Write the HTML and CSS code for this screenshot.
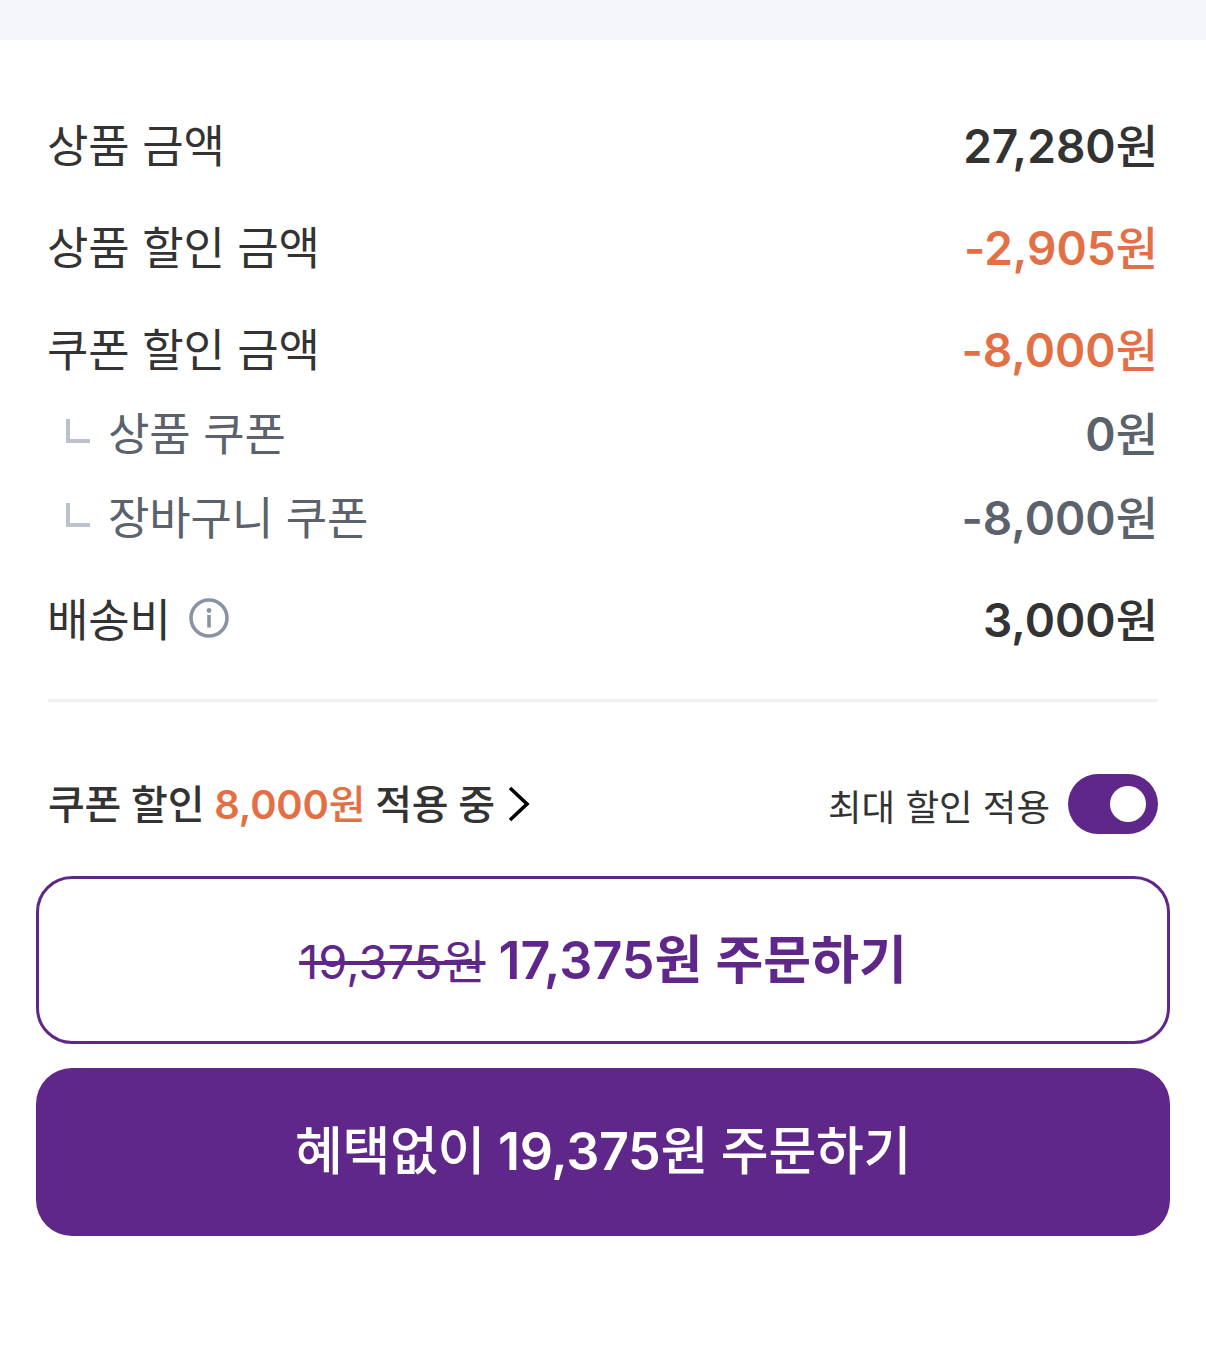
FILE: index.html
```html
<!DOCTYPE html>
<html lang="ko">
  <head>
    <meta charset="UTF-8" />
    <meta name="viewport" content="width=device-width, initial-scale=1.0" />
    <title>주문하기</title>
    <link rel="stylesheet" href="styles.css">
  </head>
  <body>
    <div class="top-band"></div>
    <section class="summary">
      <div class="row">
        <span>상품 금액</span>
        <span class="amount">27,280원</span>
      </div>
      <div class="row">
        <span>상품 할인 금액</span>
        <span class="amount discount">-2,905원</span>
      </div>
      <div class="row">
        <span>쿠폰 할인 금액</span>
        <span class="amount discount">-8,000원</span>
      </div>
      <div class="row sub-row">
        <span class="sub-label"><i class="corner"></i>상품 쿠폰</span>
        <span class="amount">0원</span>
      </div>
      <div class="row sub-row">
        <span class="sub-label"><i class="corner"></i>장바구니 쿠폰</span>
        <span class="amount">-8,000원</span>
      </div>
      <div class="row">
        <span class="shipping-label">
          배송비
          <svg class="info-icon" viewBox="0 0 40 40" aria-hidden="true">
            <circle cx="20" cy="20" r="18" fill="none" stroke="#8a93a3" stroke-width="3.6" />
            <circle cx="20" cy="12.5" r="2.4" fill="#8a93a3" />
            <rect x="18.2" y="17" width="3.6" height="12.5" fill="#8a93a3" />
          </svg>
        </span>
        <span class="amount">3,000원</span>
      </div>
    </section>

    <div class="divider"></div>

    <section class="coupon-bar">
      <div class="coupon-link">
        <span class="coupon-text">쿠폰 할인 <span class="coupon-value">8,000원</span> 적용 중</span>
        <svg class="chevron" viewBox="0 0 24 36" aria-hidden="true">
          <path d="M3 2 L20 18 L3 34" fill="none" stroke="#000" stroke-width="3.6" />
        </svg>
      </div>
      <div class="max-discount">
        <span class="max-text">최대 할인 적용</span>
        <span class="toggle"><i class="knob"></i></span>
      </div>
    </section>

    <div class="buttons">
      <button type="button" class="btn btn-outline">
        <s class="old-price">19,375원</s> 17,375원 주문하기
      </button>
      <button type="button" class="btn btn-solid">혜택없이 19,375원 주문하기</button>
    </div>
  </body>
</html>
```

FILE: styles.css
```css
* {
  box-sizing: border-box;
}
body {
  font-family: "Inter", "Noto Sans CJK KR", sans-serif;
  background-color: #ffffff;
  color: #333333;
  margin: 0;
  height: 1361px;
  overflow: hidden;
}
.top-band {
  height: 40px;
  background-color: #f4f5f9;
}
.summary {
  padding: 43px 48px 0 47px;
}
.row {
  display: flex;
  justify-content: space-between;
  align-items: center;
  height: 84px;
  margin-top: 18px;
  font-size: 45px;
  letter-spacing: -0.1px;
}
.amount {
  font-size: 46px;
  font-weight: 560;
  letter-spacing: 0;
}
.discount {
  color: #e36f45;
}
.sub-row {
  margin-top: 0;
  color: #5b626b;
}
.sub-label {
  display: flex;
  align-items: center;
}
.corner {
  width: 24px;
  height: 24px;
  margin: 0 18px 0 19px;
  border-left: 4px solid #bcc2cc;
  border-bottom: 4px solid #bcc2cc;
}
.shipping-label {
  display: flex;
  align-items: center;
  gap: 18px;
}
.info-icon {
  width: 40px;
  height: 40px;
  margin-top: 2px;
}
.divider {
  height: 3px;
  margin: 40px 48px 0;
  background-color: #f0f1f3;
}
.coupon-bar {
  display: flex;
  justify-content: space-between;
  align-items: center;
  height: 60px;
  margin: 72px 48px 0;
}
.coupon-link {
  display: flex;
  align-items: center;
  gap: 12px;
  font-size: 40px;
  font-weight: 560;
  letter-spacing: -0.2px;
}
.coupon-text {
  margin-bottom: 4px;
}
.coupon-value {
  color: #e36f45;
}
.chevron {
  width: 24px;
  height: 36px;
}
.max-discount {
  display: flex;
  align-items: center;
  gap: 18px;
  font-size: 36.5px;
}
.max-text {
  margin-top: 2px;
}
.toggle {
  display: flex;
  align-items: center;
  justify-content: flex-end;
  width: 90px;
  height: 60px;
  padding-right: 12px;
  border-radius: 30px;
  background-color: #5f2789;
}
.knob {
  width: 36px;
  height: 36px;
  border-radius: 50%;
  background-color: #ffffff;
}
.buttons {
  display: flex;
  flex-direction: column;
  gap: 24px;
  margin: 42px 36px 0;
}
.btn {
  height: 168px;
  border-radius: 36px;
  font-family: inherit;
  font-size: 52px;
  font-weight: 600;
}
.btn-outline {
  padding-bottom: 8px;
  background-color: #ffffff;
  border: 3px solid #5f2789;
  color: #5f2789;
}
.old-price {
  font-size: 47px;
  font-weight: 400;
}
.btn-solid {
  padding-bottom: 10px;
  background-color: #5f2789;
  border: none;
  color: #ffffff;
  font-weight: 560;
  letter-spacing: -0.3px;
}
```
